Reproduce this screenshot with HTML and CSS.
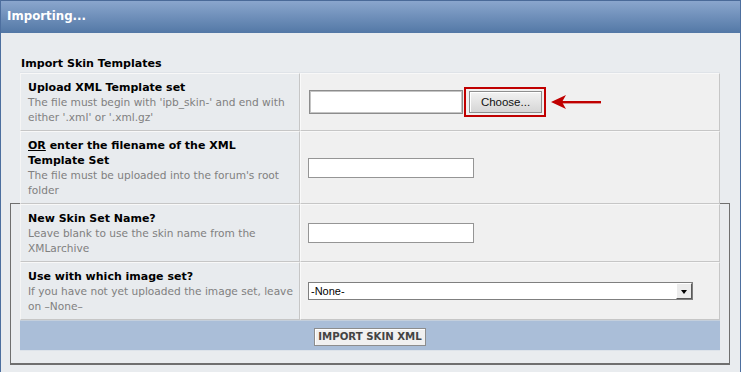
FILE: index.html
```html
<!DOCTYPE html>
<html lang="en">
<head>
    <meta charset="UTF-8">
    <title>Importing...</title>
    <link rel="stylesheet" href="styles.css">
</head>
<body>
    <div class="window">
        <div class="titlebar">Importing...</div>

        <div class="panel">
            <div class="panel-title">Import Skin Templates</div>
            <table class="form-table">
                <tr>
                    <td class="label-cell">
                        <div class="label">Upload XML Template set</div>
                        <div class="desc">The file must begin with 'ipb_skin-' and end with either '.xml' or '.xml.gz'</div>
                    </td>
                    <td class="field-cell">
                        <div class="file-field">
                            <span class="file-box"></span>
                            <span class="highlight"><span class="choose-btn">Choose...</span></span>
                            <!-- red arrow pointing at the button -->
                            <svg class="arrow" width="52" height="16" viewBox="0 0 52 16">
                                <path d="M1 8 L16 1 L12 8 L16 15 Z" fill="#c00000"/>
                                <rect x="12" y="7" width="39" height="2.4" fill="#c00000"/>
                            </svg>
                        </div>
                    </td>
                </tr>
                <tr>
                    <td class="label-cell">
                        <div class="label"><u>OR</u> enter the filename of the XML Template Set</div>
                        <div class="desc">The file must be uploaded into the forum's root folder</div>
                    </td>
                    <td class="field-cell">
                        <input type="text" class="text-input">
                    </td>
                </tr>
                <tr>
                    <td class="label-cell">
                        <div class="label">New Skin Set Name?</div>
                        <div class="desc">Leave blank to use the skin name from the XMLarchive</div>
                    </td>
                    <td class="field-cell">
                        <input type="text" class="text-input">
                    </td>
                </tr>
                <tr>
                    <td class="label-cell">
                        <div class="label">Use with which image set?</div>
                        <div class="desc">If you have not yet uploaded the image set, leave on &ndash;None&ndash;</div>
                    </td>
                    <td class="field-cell">
                        <div class="select-box">
                            <span class="select-text">-None-</span>
                            <span class="select-arrow"></span>
                        </div>
                    </td>
                </tr>
                <tr>
                    <td class="footer-cell" colspan="2">
                        <button class="submit-btn">IMPORT SKIN XML</button>
                    </td>
                </tr>
            </table>
        </div>
    </div>
</body>
</html>
```

FILE: styles.css
```css
html, body {
    margin: 0;
    padding: 0;
}
body {
    font-family: Verdana, "DejaVu Sans", sans-serif;
    background: #e9ecef;
}
.window {
    box-sizing: border-box;
    width: 741px;
    height: 372px;
    border-left: 1px solid #4d6f9f;
    border-right: 1px solid #4d6f9f;
    background: #e9ecef;
    overflow: hidden;
}
.titlebar {
    height: 32px;
    line-height: 31px;
    border-top: 1px solid #4a6a98;
    background: linear-gradient(#8aa6cd, #5378a6);
    color: #fff;
    font-weight: bold;
    font-size: 11.8px;
    padding-left: 6px;
}
.panel {
    position: relative;
    padding: 0 20px 0 19px;
    margin-top: 23px;
}
/* the grey frame that sits behind the table */
.panel::before {
    content: "";
    position: absolute;
    left: 9px;
    right: 10px;
    top: 147px;
    bottom: -14px;
    border: 1px solid #6f6f6f;
    border-bottom-width: 2px;
    z-index: 0;
}
.panel-title {
    position: relative;
    font-size: 11.1px;
    font-weight: bold;
    line-height: 15px;
    padding-left: 1px;
    margin-bottom: 1px;
}
.form-table {
    position: relative;
    z-index: 1;
    width: 700px;
    border-collapse: separate;
    border-spacing: 0;
    border-top: 1px solid #dfe3e8;
}
.form-table td {
    vertical-align: middle;
    border-bottom: 1px solid #c6c6c6;
    border-top: 1px solid #f8f8f8;
}
.label-cell {
    width: 280px;
    box-sizing: border-box;
    background: #e8ebee;
    padding: 6px 3px 5px 7px;
    border-right: 1px solid #c6c6c6;
    border-left: 1px solid #f5f5f5;
}
.field-cell {
    background: #f0f0f0;
    padding: 0 7px;
    border-left: 1px solid #fafafa;
    border-right: 1px solid #c6c6c6;
}
.label {
    font-size: 11px;
    font-weight: bold;
    line-height: 15px;
    color: #000;
}
.desc {
    font-size: 10.6px;
    line-height: 15px;
    color: #808080;
}
.file-field {
    display: flex;
    align-items: center;
}
.file-box {
    display: block;
    box-sizing: border-box;
    width: 154px;
    height: 24px;
    background: #fff;
    border: 1px solid #8c8c8c;
    box-shadow: inset 0 0 0 1px #c4c4c4;
    margin-left: 1px;
}
.highlight {
    display: block;
    border: 2px solid #c00000;
    padding: 2px 2px 2px 3px;
    margin-left: 1px;
}
.choose-btn {
    display: block;
    box-sizing: border-box;
    width: 73px;
    height: 22px;
    line-height: 20px;
    text-align: center;
    font-family: "Liberation Sans", Arial, sans-serif;
    font-size: 11.5px;
    color: #111;
    background: linear-gradient(#f2f2f2, #d6d6d6);
    border: 1px solid #8e8e8e;
    box-shadow: inset 1px 1px #fff;
}
.arrow {
    display: block;
    margin-left: 4px;
}
.text-input {
    display: block;
    box-sizing: border-box;
    width: 166px;
    height: 20px;
    margin: 0;
    padding: 0 3px;
    border: 1px solid #959595;
    background: #fff;
}
.select-box {
    display: flex;
    box-sizing: border-box;
    width: 385px;
    height: 18px;
    border: 1px solid #7f7f7f;
    background: #fff;
    font-family: "Liberation Sans", Arial, sans-serif;
    font-size: 11px;
}
.select-text {
    flex: 1;
    line-height: 16px;
    padding-left: 2px;
}
.select-arrow {
    position: relative;
    width: 16px;
    box-sizing: border-box;
    background: #ececec;
    border-left: 1px solid #fff;
    border-top: 1px solid #fff;
    border-right: 1px solid #5a5a5a;
    border-bottom: 1px solid #5a5a5a;
}
.select-arrow::after {
    content: "";
    position: absolute;
    left: 4px;
    top: 6px;
    border-left: 3.5px solid transparent;
    border-right: 3.5px solid transparent;
    border-top: 4px solid #000;
}
.footer-cell {
    background: #aabed8;
    text-align: center;
    height: 29px;
    padding: 0;
}
.form-table td.footer-cell {
    border-top: 1px solid #c4cfdc;
    border-bottom: 1px solid #dde3ea;
}
.submit-btn {
    font-family: Verdana, "DejaVu Sans", sans-serif;
    font-weight: bold;
    font-size: 10.2px;
    color: #444;
    background: #f0f0f0;
    border: 1px solid #8d8d8d;
    box-shadow: inset 1px 1px #fff;
    height: 18px;
    padding: 0 3px;
    margin: 0;
}
```
